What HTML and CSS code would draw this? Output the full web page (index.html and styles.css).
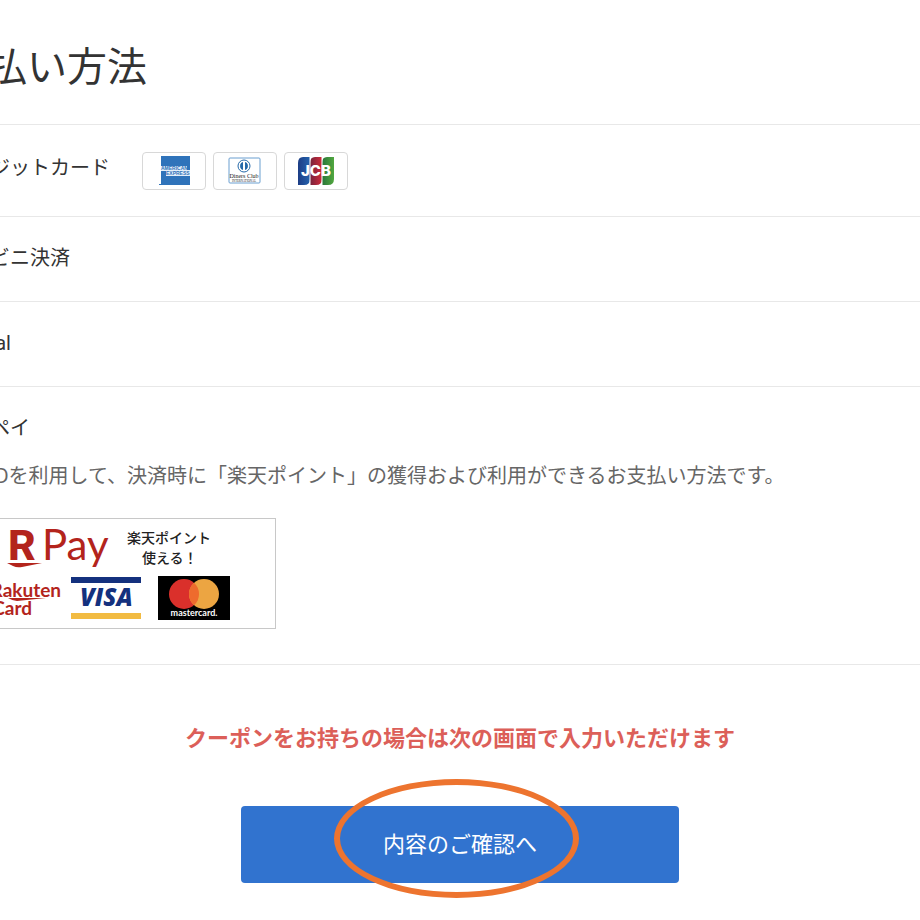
FILE: index.html
```
<!DOCTYPE html>
<html lang="ja">
<head>
    <meta charset="UTF-8">
    <meta name="viewport" content="width=device-width, initial-scale=1.0">
    <title>お支払い方法</title>
    <link rel="stylesheet" href="styles.css">
</head>
<body>

    <main class="page">
        <h1 class="page-title">お支払い方法</h1>

        <ul class="payment-list">
            <!-- クレジットカード -->
            <li class="payment-item payment-card">
                <span class="payment-name">クレジットカード</span>
                <span class="card-brands">
                    <svg class="brand" viewBox="1 1 62 36" role="img" aria-label="American Express">
                        <rect x="19" y="4" width="29" height="29" fill="#2f73ba"/>
                        <rect x="17" y="32" width="2" height="1" fill="#2f73ba"/>
                        <path d="M19 14h26v4h3v6H24v-5h-5z" fill="#e4eef8"/>
                        <g class="brand-text" font-size="5" fill="#2f73ba">
                            <text x="19" y="18">AMERICAN</text>
                            <text x="24" y="23">EXPRESS</text>
                        </g>
                    </svg>
                    <svg class="brand" viewBox="1 1 62 36" role="img" aria-label="Diners Club">
                        <rect x="16" y="6" width="31" height="25" rx="1" fill="#fff" stroke="#6b9fd0"/>
                        <circle cx="31" cy="14" r="6" fill="#fff" stroke="#2468a8"/>
                        <path d="M30 10a4.200 4.200 0 0 0 0 8zM32 10a4.200 4.200 0 0 1 0 8z" fill="#2468a8"/>
                        <text class="brand-serif" x="31" y="26" font-size="6" text-anchor="middle">Diners Club</text>
                        <text class="brand-serif" x="31" y="30" font-size="3" text-anchor="middle">INTERNATIONAL</text>
                    </svg>
                    <svg class="brand" viewBox="1 1 62 36" role="img" aria-label="JCB">
                        <defs>
                            <linearGradient id="jcb-blue"><stop offset="0" stop-color="#1d3d85"/><stop offset="1" stop-color="#2463ae"/></linearGradient>
                            <linearGradient id="jcb-red"><stop offset="0" stop-color="#75233c"/><stop offset="1" stop-color="#d02a3a"/></linearGradient>
                            <linearGradient id="jcb-green"><stop offset="0" stop-color="#28743a"/><stop offset="1" stop-color="#52a83f"/></linearGradient>
                        </defs>
                        <path d="M19 5h7v22q0 6-6 6h-6V11q0-6 5-6z" fill="url(#jcb-blue)"/>
                        <path d="M31 5h7v22q0 6-6 6h-6V11q0-6 5-6z" fill="url(#jcb-red)"/>
                        <path d="M43 5h7v22q0 6-6 6h-6V11q0-6 5-6z" fill="url(#jcb-green)"/>
                        <path d="M26 5v28M38 5v28" stroke="#fff"/>
                        <text class="jcb-text" x="32" y="24" font-size="15" text-anchor="middle">JCB</text>
                    </svg>
                </span>
            </li>

            <!-- コンビニ決済 -->
            <li class="payment-item">
                <span class="payment-name">コンビニ決済</span>
            </li>

            <!-- PayPal -->
            <li class="payment-item">
                <span class="payment-name">PayPal</span>
            </li>

            <!-- 楽天ペイ -->
            <li class="payment-item">
                <span class="payment-name">楽天ペイ</span>
                <p class="payment-note">楽天IDを利用して、決済時に「楽天ポイント」の獲得および利用ができるお支払い方法です。</p>
                <svg class="rakuten-banner" viewBox="4 0 326 111" role="img" aria-label="R Pay 楽天ポイント使える！">
                    <rect x="4.500" y="0.500" width="325" height="110" fill="#fff" stroke="#c8c8c8"/>
                    <g fill="#b3241c">
                        <text class="r-mark" x="62" y="42" font-size="43">R</text>
                        <path d="M61 45h35l-20 4q-5 1-9-1z"/>
                        <text class="r-pay" x="96" y="42" font-size="42">Pay</text>
                        <text class="r-card" x="115" y="79" font-size="19" text-anchor="end">Rakuten</text>
                        <path d="M62 80h38l-29 3q-4 0-9-3z"/>
                        <text class="r-card" x="86" y="97" font-size="19" text-anchor="end">Card</text>
                    </g>
                    <g class="point-text" font-size="14">
                        <text x="181" y="25">楽天ポイント</text>
                        <text x="196" y="45">使える！</text>
                    </g>
                    <rect x="125" y="59" width="70" height="6" fill="#14317e"/>
                    <rect x="125" y="95" width="70" height="6" fill="#f2bb42"/>
                    <text class="visa-text" x="134" y="88" font-size="24">VISA</text>
                    <rect x="212" y="58" width="72" height="44" fill="#000"/>
                    <circle cx="238" cy="76" r="15" fill="#da302b"/>
                    <circle cx="258" cy="76" r="15" fill="#eca542"/>
                    <path d="M248 64.800a15 15 0 0 1 0 22.400a15 15 0 0 1 0-22.400z" fill="#ee6b2d"/>
                    <text class="master-text" x="248" y="98" font-size="9" text-anchor="middle">mastercard.</text>
                </svg>
            </li>
        </ul>

        <form class="confirm">
            <p class="coupon-note">クーポンをお持ちの場合は次の画面で入力いただけます</p>
            <div class="confirm-area">
                <button type="submit" class="confirm-button">内容のご確認へ</button>
                <span class="highlight"></span>
            </div>
        </form>
    </main>

</body>
</html>
```
FILE: styles.css
```
* {
    box-sizing: border-box;
}

body {
    margin: 0;
    background-color: #fff;
    color: #333;
    font-family: Roboto, "Noto Sans CJK JP", sans-serif;
    font-size: 20px;
    line-height: 32px;
    overflow-x: hidden;
}

/* 左右が画面の外まで広がる */
.page {
    margin: 0 -93px;
}

.page-title {
    margin: 0;
    padding: 38px 0 26px;
    font-size: 40px;
    line-height: 60px;
    font-weight: 400;
}

/* --- 支払い方法の一覧 --- */
.payment-list {
    margin: 0;
    padding: 0;
    list-style: none;
    border-top: 1px solid #e8e8e8;
}

.payment-item {
    padding: 25px 43px 27px;
    border-bottom: 1px solid #e8e8e8;
}

.payment-card {
    display: flex;
    align-items: flex-start;
    gap: 32px;
    padding-top: 27px;
    padding-bottom: 26px;
}

.payment-name {
    display: block;
}

.card-brands {
    display: flex;
    gap: 7px;
}

.brand {
    display: block;
    width: 64px;
    height: 38px;
    border: 1px solid #d8d8d8;
    border-radius: 4px;
}

.brand-text {
    font-family: "Liberation Sans", sans-serif;
    font-weight: 700;
}

.brand-serif {
    font-family: "Liberation Serif", serif;
    fill: #222;
}

.jcb-text {
    font-family: "Inter", sans-serif;
    font-weight: 800;
    fill: #fff;
}

.payment-note {
    margin: 16px 0 26px;
    color: #666;
}

/* --- 楽天ペイのバナー --- */
.rakuten-banner {
    display: block;
    width: 326px;
    height: 111px;
    margin-bottom: 35px;
}

.payment-item:last-child {
    padding-bottom: 0;
}

.r-mark {
    font-family: "Roboto", sans-serif;
    font-weight: 800;
}

.r-pay {
    font-family: "Lato", sans-serif;
}

.r-card {
    font-family: "Lato", sans-serif;
    font-weight: 700;
}

.point-text {
    font-family: "Noto Sans CJK JP", sans-serif;
    font-weight: 500;
    fill: #222;
}

.visa-text {
    font-family: "Open Sans", sans-serif;
    font-weight: 800;
    font-style: italic;
    fill: #14317e;
}

.master-text {
    font-family: "Lato", sans-serif;
    font-weight: 700;
    fill: #fff;
}

/* --- 確認ボタン --- */
.confirm {
    padding: 58px 0 37px;
    text-align: center;
}

.coupon-note {
    margin: 0 0 51px;
    color: #dc5f59;
    font-size: 22px;
    font-weight: 700;
}

.confirm-area {
    position: relative;
    width: 438px;
    max-width: 100%;
    margin: 0 auto;
}

.confirm-button {
    display: block;
    width: 100%;
    padding: 23px 0 22px;
    border: none;
    border-radius: 4px;
    background-color: #3173cf;
    color: #fff;
    font-family: inherit;
    font-size: 22px;
    line-height: 32px;
    cursor: pointer;
}

/* ボタンを囲むオレンジの丸 */
.highlight {
    position: absolute;
    top: -27px;
    left: 93px;
    width: 245px;
    height: 119px;
    border: 6px solid #ed742f;
    border-radius: 50%;
    pointer-events: none;
}
```
